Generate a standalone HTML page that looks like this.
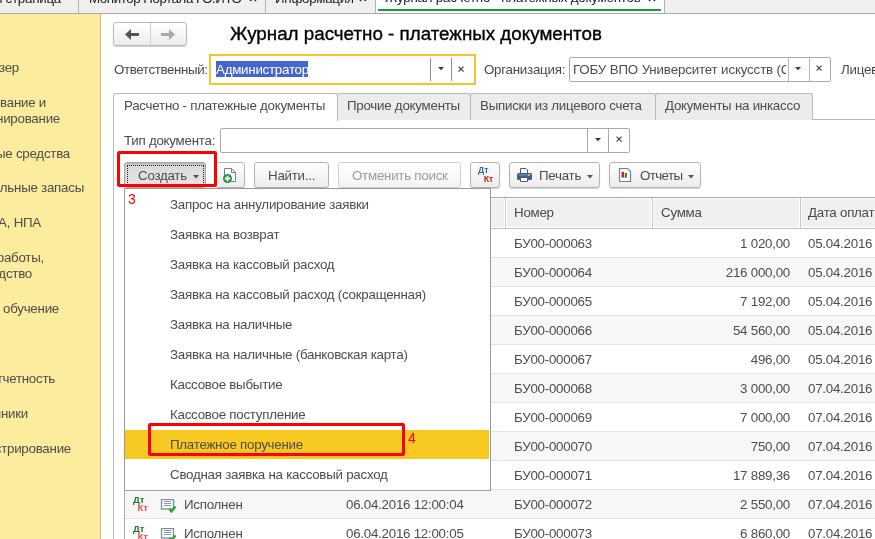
<!DOCTYPE html>
<html><head><meta charset="utf-8">
<style>
*{box-sizing:border-box;margin:0;padding:0}
html,body{width:875px;height:539px;overflow:hidden;background:#fff}
body{position:relative;font-family:"Liberation Sans",sans-serif;font-size:13.33px;letter-spacing:-0.25px;color:#4d4d4d}
.a{position:absolute}
.t{position:absolute;white-space:nowrap;line-height:15px}
/* top tabs */
#topbar{left:0;top:0;width:875px;height:14px;background:#f0f0f0;border-bottom:1px solid #a9a9a9}
.tsep{position:absolute;top:0;width:1px;height:13px;background:#b0b0b0}
/* sidebar */
#side{left:0;top:14px;width:101px;height:525px;background:#fbec9e;border-right:1px solid #cbbb7c}
.st{position:absolute;white-space:nowrap;color:#4d4d4d;font-size:13.33px;line-height:16px;letter-spacing:-0.25px}
/* buttons */
.btn{position:absolute;height:26px;border:1px solid #b4b4b4;border-radius:3px;background:linear-gradient(#ffffff,#ececec);box-shadow:0 1px 1px rgba(0,0,0,.18)}
.btn span{position:absolute;white-space:nowrap;top:5px;line-height:15px;color:#4d4d4d}
.inp{position:absolute;border:1px solid #aaa;border-radius:2px;background:#fff}
.tab{position:absolute;top:93px;height:27px;border:1px solid #b9b9b9;border-bottom:none;border-radius:3px 3px 0 0;background:#ececec}
.tab span{position:absolute;top:4px;left:9px;white-space:nowrap;line-height:15px;color:#4d4d4d}
.row{position:absolute;left:125px;width:750px;height:29px;border-bottom:1px solid #e4e4e4}
.row.g{background:#f7f7f7}
.c{position:absolute;top:7px;white-space:nowrap;line-height:15px;color:#4d4d4d}
.mi{position:absolute;left:170px;white-space:nowrap;line-height:15px;color:#4d4d4d}
</style></head><body>
<div id="root" style="position:absolute;left:0;top:0;width:875px;height:539px;will-change:transform">

<!-- top bar -->
<div id="topbar" class="a">
  <div class="t" style="right:814px;top:-9px;color:#222">я страница</div>
  <div class="tsep" style="left:78px"></div>
  <div class="t" style="left:89px;top:-9px;color:#222;letter-spacing:-0.45px">Монитор Портала ГО.ИТО</div>
  <svg class="a" letter-spacing="0" style="left:249px;top:-5px" width="9" height="8"><path d="M1 0L7 6M7 0L1 6" stroke="#333" stroke-width="1.6"/></svg>
  <div class="tsep" style="left:265px"></div>
  <div class="t" style="left:275px;top:-9px;color:#222;letter-spacing:-0.28px">Информация</div>
  <svg class="a" letter-spacing="0" style="left:359px;top:-5px" width="9" height="8"><path d="M1 0L7 6M7 0L1 6" stroke="#333" stroke-width="1.6"/></svg>
  <div class="tsep" style="left:375px"></div>
  <div class="a" style="left:376px;top:0;width:288px;height:13px;background:#fff"></div>
  <div class="t" style="left:385px;top:-10px;color:#222;letter-spacing:-0.22px">Журнал расчетно - платежных документов</div>
  <svg class="a" letter-spacing="0" style="left:648px;top:-5px" width="9" height="8"><path d="M1 0L7 6M7 0L1 6" stroke="#333" stroke-width="1.6"/></svg>
  <div class="a" style="left:378px;top:9px;width:283px;height:2px;background:#1e9a3c"></div>
  <div class="tsep" style="left:664px"></div>
</div>

<!-- sidebar -->
<div id="side" class="a">
  <div class="st" style="right:81px;top:46px">Органайзер</div>
  <div class="st" style="right:54px;top:81px">Планирование и</div>
  <div class="st" style="right:40px;top:97px">санкционирование</div>
  <div class="st" style="right:30px;top:132px">Основные средства</div>
  <div class="st" style="right:16px;top:166px">Материальные запасы</div>
  <div class="st" style="right:59px;top:201px">НМА, НПА</div>
  <div class="st" style="right:56px;top:236px">Услуги, работы,</div>
  <div class="st" style="right:68px;top:252px">производство</div>
  <div class="st" style="right:41px;top:287px">Денежное обучение</div>
  <div class="st" style="right:45px;top:357px">Отчетность</div>
  <div class="st" style="right:72px;top:392px">Справочники</div>
  <div class="st" style="right:29px;top:427px">Администрирование</div>
</div>

<!-- nav buttons -->
<div class="btn" style="left:113px;top:22px;width:74px;height:24px;border-color:#b8b8b8"></div>
<div class="a" style="left:150px;top:23px;width:1px;height:22px;background:#d0d0d0"></div>
<svg class="a" style="left:125px;top:29px" width="15" height="11" viewBox="0 0 15 11"><path d="M0 5.5L6 0V4H14V7H6V11Z" fill="#555"/></svg>
<svg class="a" style="left:161px;top:29px" width="15" height="11" viewBox="0 0 15 11"><path d="M14 5.5L8 0V4H0V7H8V11Z" fill="#aaa"/></svg>

<!-- title -->
<div class="t" style="left:230px;top:23px;font-size:18.8px;line-height:22px;color:#000;letter-spacing:0;-webkit-text-stroke:0.35px #000">Журнал расчетно - платежных документов</div>

<!-- Ответственный -->
<div class="t" style="left:114px;top:62px;color:#4a4a4a;letter-spacing:-0.38px">Ответственный:</div>
<div class="a" style="left:209px;top:54px;width:267px;height:31px;border:2px solid #f6c42a;background:#fff"></div>
<div class="a" style="left:216px;top:61px;width:92px;height:16px;background:#4466cc"></div>
<div class="t" style="left:216px;top:62px;color:#fff">Администратор</div>
<div class="a" style="left:430px;top:58px;width:1px;height:23px;background:#8f8f8f"></div>
<div class="a" style="left:451px;top:58px;width:1px;height:23px;background:#8f8f8f"></div>
<svg class="a" style="left:438px;top:67px" width="6" height="4"><path d="M0 0H6L3 3.2Z" fill="#3a3a3a"/></svg>
<svg class="a" style="left:458px;top:66px" width="7" height="7"><path d="M0.6 0.6L5.6 5.6M5.6 0.6L0.6 5.6" stroke="#444" stroke-width="1.2"/></svg>

<!-- Организация -->
<div class="t" style="left:484px;top:62px;color:#4a4a4a">Организация:</div>
<div class="inp" style="left:569px;top:57px;width:262px;height:25px"></div>
<div class="a" style="left:570px;top:58px;width:216px;height:23px;overflow:hidden"><div class="t" style="left:3px;top:4px;color:#4d4d4d;letter-spacing:-0.15px">ГОБУ ВПО Университет искусств (С</div></div>
<div class="a" style="left:788px;top:58px;width:1px;height:23px;background:#b4b4b4"></div>
<div class="a" style="left:809px;top:58px;width:1px;height:23px;background:#b4b4b4"></div>
<svg class="a" style="left:795px;top:67px" width="6" height="4"><path d="M0 0H6L3 3.2Z" fill="#3a3a3a"/></svg>
<svg class="a" style="left:816px;top:65px" width="7" height="7"><path d="M0.6 0.6L5.6 5.6M5.6 0.6L0.6 5.6" stroke="#444" stroke-width="1.2"/></svg>
<div class="t" style="left:841px;top:62px;color:#4a4a4a">Лицевой</div>

<!-- tabs -->
<div class="a" style="left:113px;top:119px;width:762px;height:1px;background:#b9b9b9"></div>
<div class="a" style="left:113px;top:119px;width:1px;height:420px;background:#b9b9b9"></div>
<div class="tab" style="left:337px;width:134px"><span>Прочие документы</span></div>
<div class="tab" style="left:470px;width:186px"><span>Выписки из лицевого счета</span></div>
<div class="tab" style="left:655px;width:158px"><span>Документы на инкассо</span></div>
<div class="tab" style="left:113px;width:225px;background:#fff;height:28px"><span style="left:10px">Расчетно - платежные документы</span></div>

<!-- Тип документа -->
<div class="t" style="left:124px;top:133px;color:#4a4a4a">Тип документа:</div>
<div class="inp" style="left:220px;top:128px;width:410px;height:25px"></div>
<div class="a" style="left:587px;top:129px;width:1px;height:23px;background:#a8a8a8"></div>
<div class="a" style="left:608px;top:129px;width:1px;height:23px;background:#a8a8a8"></div>
<svg class="a" style="left:595px;top:138px" width="6" height="4"><path d="M0 0H6L3 3.2Z" fill="#3a3a3a"/></svg>
<svg class="a" style="left:616px;top:136px" width="7" height="7"><path d="M0.6 0.6L5.6 5.6M5.6 0.6L0.6 5.6" stroke="#444" stroke-width="1.2"/></svg>

<!-- command bar -->
<div class="btn" style="left:124px;top:162px;width:82px;background:linear-gradient(#d9d9d9,#e6e6e6);border-color:#a6a6a6;box-shadow:inset 0 1px 2px rgba(0,0,0,.2)"><span style="left:13px">Создать</span></div>
<div class="a" style="left:127px;top:165px;width:77px;height:22px;border:1px dotted #222"></div>
<svg class="a" letter-spacing="0" style="left:193px;top:175px" width="7" height="4"><path d="M0 0H6L3 3.5Z" fill="#555"/></svg>
<div class="btn" style="left:216px;top:162px;width:29px"></div>
<svg class="a" letter-spacing="0" style="left:222px;top:167px" width="16" height="17" viewBox="0 0 16 17"><path d="M2.5 1.5H9.5L13.5 5.5V14.5H2.5Z" fill="#fff" stroke="#6f7f95"/><path d="M9.5 1.5V5.5H13.5" fill="none" stroke="#6f7f95"/><circle cx="5.5" cy="11.5" r="4.5" fill="#23963a"/><path d="M5.5 8.8V14.2M2.8 11.5H8.2" stroke="#fff" stroke-width="1.8"/></svg>
<div class="btn" style="left:254px;top:162px;width:75px"><span style="left:13px">Найти...</span></div>
<div class="btn" style="left:338px;top:162px;width:123px;border-color:#d0d0d0;box-shadow:none;background:linear-gradient(#fff,#f3f3f3)"><span style="left:13px;color:#9a9a9a">Отменить поиск</span></div>
<div class="btn" style="left:470px;top:162px;width:30px"></div>
<svg class="a" letter-spacing="0" style="left:476px;top:165px" width="18" height="19" viewBox="0 0 18 19"><text x="2" y="8" font-family="Liberation Sans" font-size="8.7" font-weight="bold" fill="#2f6aa3">Дт</text><text x="7.8" y="17" font-family="Liberation Sans" font-size="8.7" font-weight="bold" fill="#d01414">Кт</text></svg>

<div class="btn" style="left:509px;top:162px;width:91px"><span style="left:29px">Печать</span></div>
<svg class="a" letter-spacing="0" style="left:516px;top:167px" width="17" height="16" viewBox="0 0 17 16"><path d="M4.5 1.5H10L11.5 3V6.5H4.5Z" fill="#fff" stroke="#3f5f86"/><rect x="1" y="6" width="15" height="7" rx="1.5" fill="#3f5f86"/><rect x="2.5" y="7.5" width="12" height="1" fill="#7f9ab8"/><rect x="12" y="7.5" width="1.5" height="1" fill="#fff"/><path d="M4.5 10.5H11.5V14.5H4.5Z" fill="#fff" stroke="#3f5f86"/></svg>
<svg class="a" letter-spacing="0" style="left:587px;top:175px" width="7" height="4"><path d="M0 0H6L3 3.5Z" fill="#555"/></svg>
<div class="btn" style="left:609px;top:162px;width:92px"><span style="left:30px;letter-spacing:-0.6px">Отчеты</span></div>
<svg class="a" letter-spacing="0" style="left:617px;top:167px" width="15" height="16" viewBox="0 0 15 16"><path d="M2.5 1.5H10.5L13.5 4.5V14.5H2.5Z" rx="1" fill="#fff" stroke="#6c82a0" stroke-width="1.2"/><path d="M4.5 4.5V10.5H10.5" fill="none" stroke="#999" stroke-width="0.8"/><rect x="5" y="5" width="2.2" height="5" fill="#f01010"/><rect x="8" y="6" width="2" height="4" fill="#10a010"/></svg>
<svg class="a" letter-spacing="0" style="left:688px;top:175px" width="7" height="4"><path d="M0 0H6L3 3.5Z" fill="#555"/></svg>

<!-- table -->
<div class="a" style="left:124px;top:197px;width:751px;height:342px;border-left:1px solid #a9a9a9;border-top:1px solid #a9a9a9"></div>
<div class="a" style="left:125px;top:198px;width:750px;height:31px;background:#fff;border-bottom:1px solid #c4c4c4"></div>
<div class="a" style="left:126px;top:199px;width:378px;height:28px;background:#f0f0f0"></div>
<div class="a" style="left:505px;top:198px;width:1px;height:30px;background:#c8c8c8"></div>
<div class="a" style="left:507px;top:199px;width:144px;height:28px;background:#f0f0f0"></div>
<div class="a" style="left:652px;top:198px;width:1px;height:30px;background:#c8c8c8"></div>
<div class="a" style="left:654px;top:199px;width:145px;height:28px;background:#f0f0f0"></div>
<div class="a" style="left:800px;top:198px;width:1px;height:30px;background:#c8c8c8"></div>
<div class="a" style="left:802px;top:199px;width:73px;height:28px;background:#f0f0f0"></div>
<div class="t" style="left:514px;top:205px;color:#4a4a4a">Номер</div>
<div class="t" style="left:661px;top:205px;color:#4a4a4a">Сумма</div>
<div class="t" style="left:808px;top:205px;color:#4a4a4a">Дата оплаты</div>

<div id="rows"></div>
<div class="row" style="top:229px"><div class="c" style="left:389px">БУ00-000063</div><div class="c" style="right:85px">1 020,00</div><div class="c" style="left:683px">05.04.2016</div></div>
<div class="row g" style="top:258px"><div class="c" style="left:389px">БУ00-000064</div><div class="c" style="right:85px">216 000,00</div><div class="c" style="left:683px">05.04.2016</div></div>
<div class="row" style="top:287px"><div class="c" style="left:389px">БУ00-000065</div><div class="c" style="right:85px">7 192,00</div><div class="c" style="left:683px">05.04.2016</div></div>
<div class="row g" style="top:316px"><div class="c" style="left:389px">БУ00-000066</div><div class="c" style="right:85px">54 560,00</div><div class="c" style="left:683px">05.04.2016</div></div>
<div class="row" style="top:345px"><div class="c" style="left:389px">БУ00-000067</div><div class="c" style="right:85px">496,00</div><div class="c" style="left:683px">05.04.2016</div></div>
<div class="row g" style="top:374px"><div class="c" style="left:389px">БУ00-000068</div><div class="c" style="right:85px">3 000,00</div><div class="c" style="left:683px">07.04.2016</div></div>
<div class="row" style="top:403px"><div class="c" style="left:389px">БУ00-000069</div><div class="c" style="right:85px">7 000,00</div><div class="c" style="left:683px">07.04.2016</div></div>
<div class="row g" style="top:432px"><div class="c" style="left:389px">БУ00-000070</div><div class="c" style="right:85px">750,00</div><div class="c" style="left:683px">07.04.2016</div></div>
<div class="row" style="top:461px"><div class="c" style="left:389px">БУ00-000071</div><div class="c" style="right:85px">17 889,36</div><div class="c" style="left:683px">07.04.2016</div></div>
<div class="row g" style="top:490px"><div class="c" style="left:59px">Исполнен</div><div class="c" style="left:221px">06.04.2016 12:00:04</div><div class="c" style="left:389px">БУ00-000072</div><div class="c" style="right:85px">2 550,00</div><div class="c" style="left:683px">07.04.2016</div></div>
<div class="row" style="top:519px"><div class="c" style="left:59px">Исполнен</div><div class="c" style="left:221px">06.04.2016 12:00:05</div><div class="c" style="left:389px">БУ00-000073</div><div class="c" style="right:85px">6 860,00</div><div class="c" style="left:683px">07.04.2016</div></div>

<!-- row icons -->
<svg class="a" letter-spacing="0" style="left:132px;top:495px" width="18" height="19" viewBox="0 0 18 19"><text x="1" y="8" font-family="Liberation Sans" font-size="9.5" font-weight="bold" fill="#217a21">Дт</text><text x="5.5" y="16" font-family="Liberation Sans" font-size="9.5" font-weight="bold" fill="#f44">Кт</text></svg>

<svg class="a" letter-spacing="0" style="left:132px;top:524px" width="18" height="19" viewBox="0 0 18 19"><text x="1" y="8" font-family="Liberation Sans" font-size="9.5" font-weight="bold" fill="#217a21">Дт</text><text x="5.5" y="16" font-family="Liberation Sans" font-size="9.5" font-weight="bold" fill="#f44">Кт</text></svg>

<svg class="a" letter-spacing="0" style="left:160px;top:499px" width="17" height="14" viewBox="0 0 17 14"><rect x="1.5" y="0.5" width="12" height="9.5" fill="#fff" stroke="#7b8ba0" stroke-width="1.3"/><path d="M4 2.5H11M4 4.5H11M4 6.5H11" stroke="#8796aa"/><path d="M9.5 10L11.5 12.5L15.5 7.5" fill="none" stroke="#22a822" stroke-width="2.2"/></svg>
<svg class="a" letter-spacing="0" style="left:160px;top:528px" width="17" height="14" viewBox="0 0 17 14"><rect x="1.5" y="0.5" width="12" height="9.5" fill="#fff" stroke="#7b8ba0" stroke-width="1.3"/><path d="M4 2.5H11M4 4.5H11M4 6.5H11" stroke="#8796aa"/><path d="M9.5 10L11.5 12.5L15.5 7.5" fill="none" stroke="#22a822" stroke-width="2.2"/></svg>

<!-- dropdown menu -->
<div class="a" style="left:124px;top:188px;width:367px;height:303px;background:#fff;border:1px solid #9a9a9a"></div>
<div class="a" style="left:125px;top:430px;width:364px;height:29px;background:#f8c921"></div>
<div class="t" style="left:128px;top:192px;color:#f00;font-size:14px">3</div>
<div class="mi" style="top:197px">Запрос на аннулирование заявки</div>
<div class="mi" style="top:227px">Заявка на возврат</div>
<div class="mi" style="top:257px">Заявка на кассовый расход</div>
<div class="mi" style="top:287px">Заявка на кассовый расход (сокращенная)</div>
<div class="mi" style="top:317px">Заявка на наличные</div>
<div class="mi" style="top:347px">Заявка на наличные (банковская карта)</div>
<div class="mi" style="top:377px">Кассовое выбытие</div>
<div class="mi" style="top:407px">Кассовое поступление</div>
<div class="mi" style="top:437px">Платежное поручение</div>
<div class="mi" style="top:467px">Сводная заявка на кассовый расход</div>

<!-- annotations -->
<div class="a" style="left:117px;top:151px;width:100px;height:36px;border:3px solid #f00;border-radius:2px"></div>
<div class="a" style="left:148px;top:423px;width:257px;height:33px;border:3px solid #f00;border-radius:2px"></div>
<div class="t" style="left:408px;top:431px;color:#f00;font-size:14px">4</div>

</div>
</body></html>
